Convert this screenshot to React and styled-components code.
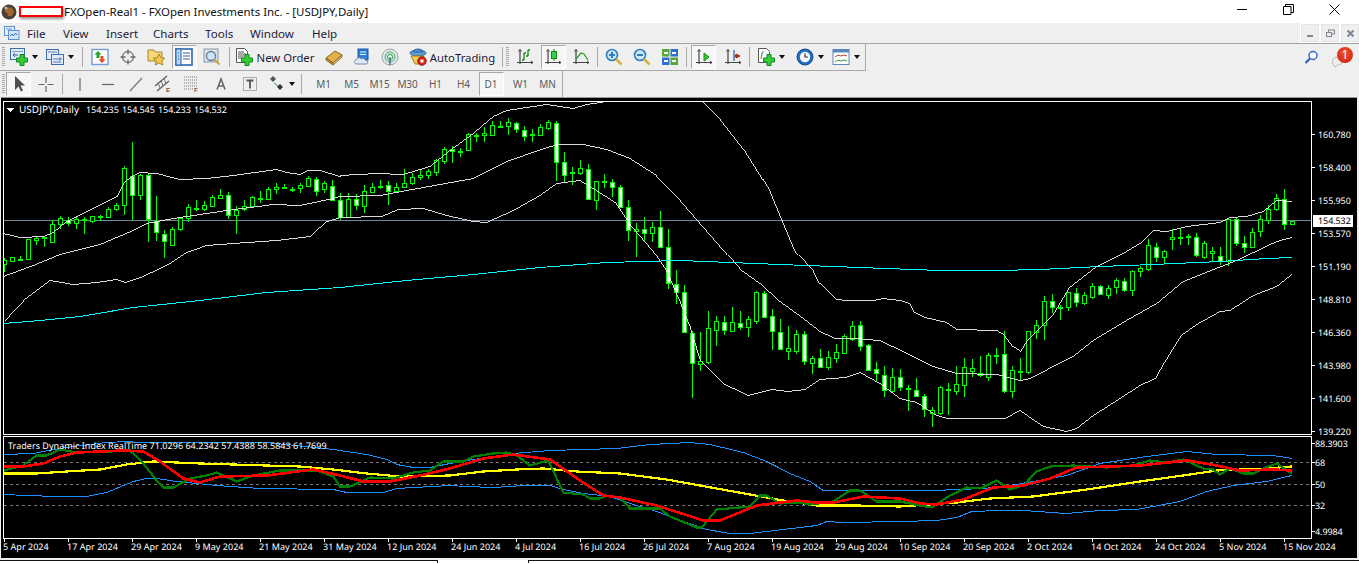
import React from 'react';
import styled, { createGlobalStyle } from 'styled-components';

const Global = createGlobalStyle`
  html, body { margin: 0; padding: 0; width: 1359px; height: 564px; overflow: hidden; background: #f0f0f0; }
  #root { width: 1359px; height: 564px; }
`;

const Page = styled.div`
  width: 1359px; height: 564px; display: flex; flex-direction: column; background: #efefef;
  font-family: "Noto Sans", "Liberation Sans", sans-serif; overflow: hidden;
`;
const TitleBar = styled.div`
  height: 23px; background: #fff; display: flex; align-items: center; flex: none; padding-left: 1px;
`;
const Redaction = styled.div`
  width: 40px; height: 7px; margin: -1px 1px 0 2px; background: #fff; border: 2px solid #f00;
  box-shadow: 1px 2px 3px rgba(0,0,0,.45);
`;
const TitleText = styled.span`font-size: 11.45px; color: #111; white-space: nowrap;`;
const WinControls = styled.div`margin-left: auto; display: flex; height: 23px; padding-right: 2px;`;
const WinButton = styled.div`width: 46px; height: 23px; display: flex; align-items: center; justify-content: center; margin-top: -2px;`;

const MenuBar = styled.div`height: 20px; display: flex; align-items: center; flex: none; padding-left: 4px; background: #efefef; position: relative;`;
const MenuItems = styled.div`display: flex; margin-left: 7px;`;
const MenuItem = styled.span`font-size: 11.6px; color: #1b1b3a; width: ${p => p.$w}px;`;
const MdiControls = styled.div`margin-left: auto; display: flex; gap: 2px; height: 20px; background: #fff; padding: 1px 0 1px 1px; box-sizing: border-box;`;
const MdiButton = styled.div`
  width: 18px; height: 18px; box-sizing: border-box; border: 1px solid #fff; background: #efefef;
  display: flex; align-items: center; justify-content: center; outline: 1px solid #e4e4e4; outline-offset: -1px;
`;

const ToolRow = styled.div`
  height: ${p => p.$h}px; display: flex; flex: none; box-sizing: border-box; position: relative;
  ${p => p.$top ? 'border-top: 1px solid #a3a3a3;' : ''}
`;
const ToolGroup = styled.div`
  width: ${p => p.$w}px; display: flex; align-items: center; box-sizing: border-box; padding-left: 2px;
  border-right: 1px solid #a9a9a9; ${p => p.$bottom ? 'border-bottom: 1px solid #a9a9a9;' : ''}
`;
const Grip = styled.div`
  width: 3px; height: 20px; margin-right: ${p => p.$m ?? 1}px; flex: none;
  background: repeating-linear-gradient(to bottom, #a8a8a8 0 1px, #efefef 1px 2px);
`;
const Sep = styled.div`
  width: ${p => p.$w}px; height: 20px; flex: none; display: flex; justify-content: center;
  margin-right: ${p => p.$mr || 0}px;
  &::before { content: ""; width: 1px; height: 100%; background: #a9a9a9; }
`;
const Tool = styled.div`
  width: ${p => p.$w}px; height: 24px; flex: none; display: flex; align-items: center; justify-content: center;
  box-sizing: border-box; gap: ${p => p.$gap || 0}px; font-size: 11.3px; color: #1b1b3a; white-space: nowrap;
  padding: 0 ${p => p.$pr || 0}px 0 ${p => p.$pl || 0}px;
  ${p => p.$pressed ? `
    margin: 0 ${p.$inset || 0}px; background: repeating-conic-gradient(#f2f2f2 0 25%, #fbfbfb 0 50%) 0 0 / 2px 2px;
    border: 1px solid; border-color: #a8a8a8 #fff #fff #a8a8a8;
  ` : ''}
`;
const Caret = styled.span`
  width: 0; height: 0; border-left: 3.5px solid transparent; border-right: 3.5px solid transparent;
  border-top: 4px solid #111; flex: none;
`;
const Frame = styled.span`font-size: 10px; color: #5a5a5a; letter-spacing: -.1px;`;
const RightTools = styled.div`
  position: absolute; right: 6px; top: 3px; display: flex; align-items: center; gap: 13px;
`;
const Bubble = styled.div`position: relative; width: 22px; height: 20px;`;
const BubbleTail = styled.svg`position: absolute; left: 0; top: 6px;`;
const Badge = styled.div`
  position: absolute; right: 0; top: 0; width: 16px; height: 16px; border-radius: 50%;
  background: radial-gradient(circle at 50% 35%, #f0502e, #c9200f); color: #fff; font-size: 12px;
  display: flex; align-items: center; justify-content: center; line-height: 1;
`;

const ChartWindow = styled.div`
  height: 461px; flex: none; margin: 0 2px 0 1px; border-top: 1px solid #9a9a9a; box-sizing: border-box; background: #000; display: flex;
`;
const ChartSvg = styled.svg`display: block; width: 1356px; height: 460px;`;
const ChartText = styled.text`
  font-family: "Noto Sans", "Liberation Sans", sans-serif; font-size: ${p => p.$size || 9}px; fill: ${p => p.$fill || '#fff'};
  letter-spacing: ${p => p.$ls ?? -.08}px; text-rendering: geometricPrecision;
`;
const BottomTabs = styled.div`flex: 1; display: flex; background: #fff; margin-top: 2px; position: relative;`;
const Tab = styled.div`
  width: ${p => p.$w}px; margin-left: ${p => p.$ml || 0}px; border-top: 1px solid #111; border-left: ${p => p.$ml ? '1px solid #111' : 'none'};
  border-right: ${p => p.$ml ? 'none' : '1px solid #111'}; box-sizing: border-box; height: 3px; background: #fff;
`;

/* ---------- chart data, read from the picture ---------- */
const seg = (by, rows) => rows.map(([a, b, c, d, k]) => [by + a / 3, by + b / 3, by + c / 3, by + d / 3, k]);
const candles = [
  ...seg(100, [
    [475,480,492,515,'h'],[472,472,484,484,'h'],[468,476,476,484,'t'],[418,418,478,478,'h'],[408,415,419,435,'h'],[412,412,412,442,'t'],
    [360,373,425,428,'h'],[348,355,373,388,'h'],[352,360,368,378,'w'],[352,358,368,386,'h'],[352,358,358,402,'t'],[349,349,362,368,'h'],
    [345,348,348,362,'t'],[322,328,350,354,'h'],[310,316,328,334,'h'],[198,205,316,345,'h'],[126,228,286,360,'w'],[222,226,286,300,'h'],
    [218,226,358,425,'w'],[288,362,396,424,'w'],[390,403,424,474,'w'],[380,388,434,434,'h'],[350,354,388,392,'h'],[312,322,355,365,'h'],
    [300,324,324,334,'t'],[304,314,326,332,'h'],[286,292,318,320,'h'],[267,284,293,296,'h'],[276,284,345,356,'w'],[318,330,346,402,'h'],
    [300,317,328,332,'h'],[288,292,318,320,'h'],[274,294,294,308,'t'],[262,268,296,296,'h'],[250,262,268,282,'h'],[252,262,262,266,'t'],
    [262,267,267,275,'t'],[250,254,265,278,'h'],[228,235,258,260,'h'],[232,236,272,288,'w'],[244,248,268,280,'h'],[240,257,300,302,'w'],
    [280,300,350,360,'w'],[280,298,350,352,'h'],[282,298,316,330,'w'],[256,274,317,338,'h'],[250,260,275,278,'h'],[240,257,257,268,'t'],
    [244,256,272,314,'w'],[248,260,272,274,'h'],[208,248,262,264,'h'],[220,230,248,255,'h'],[208,224,230,240,'h'],[206,214,224,236,'h'],
    [178,179,215,228,'h'],[142,148,182,192,'h'],[138,146,154,188,'w'],[145,152,152,170,'t'],[100,103,151,152,'h'],[98,104,104,126,'t'],
    [82,100,106,126,'h'],[64,76,106,106,'h'],[64,77,77,84,'t'],[54,67,77,104,'h'],[66,68,86,98,'w'],[78,89,109,122,'w'],
    [88,102,102,126,'t'],[72,82,104,106,'h'],[60,67,83,90,'h'],[64,68,187,244,'w'],[156,187,226,246,'w'],[202,215,215,254,'t'],
    [180,205,220,226,'h'],[192,206,296,300,'w'],[244,244,299,330,'h'],[222,244,244,264,'t'],[236,245,262,292,'w'],[256,260,320,322,'w'],
    [300,322,391,424,'w'],[370,386,391,472,'h'],[352,386,398,424,'w'],[366,382,398,426,'h'],[334,382,442,444,'w'],[388,440,550,568,'w'],
    [510,552,575,612,'w'],
  ]),
  ...seg(270, [
    [45,65,185,188,'w'],[182,188,280,384,'w'],[186,274,281,303,'h'],[123,175,275,282,'h'],[138,154,180,228,'h'],[138,155,181,195,'w'],
    [112,157,182,183,'h'],[124,158,170,180,'w'],[138,148,170,201,'h'],[64,67,152,162,'h'],[64,70,140,140,'w'],[116,139,182,240,'w'],
    [148,187,236,236,'w'],[168,235,242,270,'h'],[180,193,243,252,'h'],[184,193,274,286,'w'],[258,265,278,312,'h'],[237,265,290,292,'w'],
    [243,262,290,300,'h'],[222,247,263,280,'h'],[192,198,248,250,'h'],[153,168,206,212,'h'],[153,166,227,243,'w'],[222,226,299,300,'w'],
    [276,298,310,334,'w'],[288,316,360,380,'w'],[295,322,362,364,'h'],[296,322,352,362,'w'],[345,353,353,422,'t'],[324,361,377,380,'w'],
    [373,379,418,441,'w'],[411,420,429,470,'h'],[348,352,428,436,'h'],[338,356,356,436,'t'],[288,343,362,374,'h'],[264,292,344,380,'h'],
    [267,295,302,320,'h'],[258,308,316,320,'w'],[250,256,322,332,'h'],[234,254,254,282,'t'],[183,253,364,368,'w'],[288,301,364,384,'h'],
  ]),
  ...seg(170, [
    [565,603,603,630,'t'],[482,484,605,612,'h'],[450,466,487,508,'h'],[378,394,466,510,'h'],[372,394,412,428,'w'],[406,412,412,450,'t'],
    [366,367,412,422,'h'],[354,368,397,410,'w'],[366,376,398,404,'h'],[338,349,382,388,'h'],[345,349,373,376,'w'],[345,355,374,386,'h'],
    [325,331,352,372,'h'],[325,332,361,365,'w'],[300,304,361,377,'h'],[288,295,304,321,'h'],[207,226,298,303,'h'],[220,230,262,275,'w'],
    [240,244,262,280,'h'],[176,202,208,240,'h'],[178,200,200,224,'t'],[192,198,198,225,'t'],[190,200,256,262,'w'],[214,218,260,267,'h'],
    [232,244,250,274,'h'],[232,257,273,285,'w'],[144,148,272,287,'h'],[144,148,220,227,'w'],[198,218,232,250,'w'],[174,187,232,233,'h'],
    [136,148,184,200,'h'],[106,116,149,161,'h'],[72,83,116,123,'h'],[57,86,163,180,'w'],[152,152,163,163,'h'],
  ]),
];

const pts = (ox, oy, flat) => {
  const out = [];
  for (let i = 0; i < flat.length; i += 2) out.push(`${(ox + flat[i] / 3).toFixed(1)},${Math.floor(oy + flat[i + 1] / 3) + 0.5}`);
  return out.join(' ');
};
const upperBand = [
  pts(0,100,[10,400,60,411,130,410,160,396,200,365,350,288,370,250,395,228,420,218,470,220,540,238,620,234,700,226,830,208,860,218,900,222,925,211,960,212,1020,228]),
  pts(340,100,[0,226,110,220,190,222,270,200,330,150,400,100,460,50,500,30,620,13,700,25,740,12,800,5,820,0]),
  pts(680,100,[60,0,72,6,120,54,195,150,270,270,345,450]),
  pts(680,270,[400,0,420,40,470,88,500,90,550,92,580,92,610,85,660,92,690,100,705,128,735,142,800,158,830,177,950,181,975,195,1000,230,1020,242]),
  pts(1020,170,[0,545,20,510,100,430,145,355,230,290,310,250,360,220,400,180,440,183,500,170,600,158,630,142,680,138,730,125,770,90,815,95]),
].join(' ');
const middleBand = [
  pts(0,100,[10,530,100,495,180,462,300,432,400,390,440,370,520,355,680,330,820,312,900,316,1000,295]),
  pts(340,100,[0,290,120,285,200,272,400,235,500,185,630,140,660,133,730,133,800,148,870,175,950,225,1020,298]),
  pts(680,270,[185,0,240,40,300,95,370,145,420,185,465,205,520,205,600,212,700,260,760,290,830,310,950,313,1020,332]),
  pts(1020,170,[30,625,100,590,160,560,220,510,330,445,410,400,490,335,550,310,650,270,770,215,815,203]),
].join(' ');
const lowerBand = [
  pts(0,100,[10,665,70,600,150,541,220,553,290,548,350,538,375,547,430,530,510,490,560,458,620,437,700,430,830,420,930,410,980,365,1015,355]),
  pts(340,100,[0,352,125,350,175,328,250,325,320,345,400,364,440,368,520,330,600,285,650,250,720,240,760,265,830,310,870,370,940,450,985,520,1020,600]),
  pts(680,270,[0,92,30,165,60,265,135,342,205,376,275,358,325,365,375,357,420,327,495,322,540,307,600,340,660,385,710,397,770,435,805,445,975,445,1020,422]),
  pts(1020,170,[70,768,140,785,170,775,220,735,300,685,360,645,405,625,430,580,480,500,530,462,600,425,630,420,700,375,770,348,815,312]),
].join(' ');
const average = [
  pts(0,100,[10,670,120,660,240,650,400,622,600,600,800,578,1020,562]),
  pts(340,100,[0,562,200,542,400,523,600,503,800,487,1020,481]),
  pts(0,0,[2340,792,2820,810,3048,810,3060,807,3120,807,3300,798,3459,792,3660,783,3801,774,3876,771]),
].join(' ');

const ind = (a, b, c) => [pts(0,430,a), pts(450,430,b), pts(900,430,c)].join(' ');
const tdiUpper = ind(
  [12,73,100,70,160,58,220,48,320,38,380,35,420,36,560,37,700,36,800,38,1000,58,1100,72,1160,87,1190,103,1240,112,1290,112],
  [0,100,50,90,190,70,300,62,400,57,500,54,600,43,720,37,780,43,880,68,950,95,1020,130,1080,155,1120,180,1350,182],
  [100,180,250,175,330,165,400,155,500,135,600,100,740,78,860,65,950,72,1120,76,1175,85]);
const tdiLower = ind(
  [12,194,80,197,170,200,260,200,320,188,400,155,440,146,470,146,530,155,650,165,780,175,1000,178,1040,187,1150,187,1190,175,1350,165],
  [50,170,130,173,220,167,300,165,340,178,400,190,480,200,540,220,620,245,700,275,770,298,840,310,900,310,1000,298,1100,285,1130,274,1180,277,1350,275],
  [110,272,170,262,215,244,300,241,370,241,500,250,600,241,710,237,840,213,920,184,1000,165,1100,153,1175,137]);
const tdiYellow = ind(
  [12,131,110,131,200,125,300,118,380,102,460,93,600,100,900,108,1000,118,1100,130,1200,140,1350,135],
  [100,125,200,117,280,114,380,125,510,129,650,147,750,167,900,192,1000,212,1100,226,1220,227,1350,228],
  [170,218,270,205,400,198,560,178,720,155,870,133,950,122,1100,116,1175,110]);
const tdiGreen = ind(
  [12,120,70,105,110,75,140,75,180,58,230,67,330,63,390,62,430,100,470,150,490,173,520,173,570,145,620,136,650,127,710,153,760,137,840,122,950,122,1000,140,1020,170,1050,170,1110,142,1180,145,1240,127,1290,120,1330,93],
  [40,93,70,78,130,70,170,66,200,75,240,107,295,90,340,188,400,192,420,205,450,205,470,195,510,203,540,235,630,235,660,260,740,293,755,293,800,237,900,228,930,197,950,195,990,220,1050,218,1080,222,1150,215,1200,180,1230,180,1280,215,1350,215],
  [60,225,95,233,150,195,200,172,240,175,290,150,330,178,370,165,410,125,450,110,520,107,620,112,700,107,750,90,800,97,850,87,910,115,940,117,960,132,990,115,1030,130,1060,130,1090,115,1130,100,1175,130]);
const tdiRed = ind(
  [12,110,70,110,130,100,180,78,230,66,370,60,430,65,480,95,550,145,600,157,660,138,800,137,940,118,1020,135,1090,153,1170,155,1260,135,1350,115],
  [100,85,190,72,300,88,390,150,460,195,510,203,620,225,760,272,810,270,920,225,1040,212,1100,218,1150,218,1240,200,1350,204],
  [60,220,110,222,190,207,280,172,370,165,450,145,530,113,720,107,860,90,950,107,1020,120,1120,118,1175,122]);

const priceLabels = [['160.780',135],['158.400',168],['155.950',201],['153.570',234],['151.190',267],['148.810',300],['146.360',333],['143.980',366],['141.600',399],['139.220',432]];
const indicatorLabels = [['88.3903',443],['68',462],['50',484],['32',505],['4.9984',531]];
const dates = ['5 Apr 2024','17 Apr 2024','29 Apr 2024','9 May 2024','21 May 2024','31 May 2024','12 Jun 2024','24 Jun 2024','4 Jul 2024','16 Jul 2024','26 Jul 2024','7 Aug 2024','19 Aug 2024','29 Aug 2024','10 Sep 2024','20 Sep 2024','2 Oct 2024','14 Oct 2024','24 Oct 2024','5 Nov 2024','15 Nov 2024'];

const Candle = ({ i, c }) => {
  const [hi, top, bot, lo, kind] = c;
  const px = 4 + 8 * i;
  const t = Math.round(top), b = Math.round(bot);
  return (
    <g>
      <rect x={px} y={Math.round(hi)} width="1" height={Math.max(1, Math.round(lo) - Math.round(hi))} fill="#00ff00" />
      {kind === 't'
        ? <rect x={px - 2} y={t} width="5" height="2" fill="#00ff00" />
        : <>
            <rect x={px - 2} y={t} width="5" height={Math.max(3, b - t + 1)} fill="#00ff00" />
            <rect x={px - 1} y={t + 1} width="3" height={Math.max(1, b - t - 1)} fill={kind === 'w' ? '#fff' : '#000'} />
          </>}
    </g>
  );
};

const Chart = () => (
  <ChartSvg viewBox="1 98 1356 460" shapeRendering="crispEdges">
    <defs>
      <clipPath id="mainClip"><rect x="4" y="102" width="1307" height="332" /></clipPath>
      <clipPath id="indClip"><rect x="4" y="437" width="1307" height="101" /></clipPath>
    </defs>
    <rect x="3.5" y="101.5" width="1308" height="333" fill="none" stroke="#fff" />
    <rect x="3.5" y="436.5" width="1308" height="102" fill="none" stroke="#fff" />
    <g clipPath="url(#mainClip)">
      <line x1="4" x2="1311" y1="220.5" y2="220.5" stroke="#778899" />
      {candles.map((c, i) => <Candle key={i} i={i} c={c} />)}
      <polyline points={average} fill="none" stroke="#00ffff" />
      <polyline points={upperBand} fill="none" stroke="#fff" strokeWidth=".85" />
      <polyline points={middleBand} fill="none" stroke="#fff" strokeWidth=".85" />
      <polyline points={lowerBand} fill="none" stroke="#fff" strokeWidth=".85" />
    </g>
    <polygon points="7,108 14,108 10.5,112" fill="#fff" />
    <ChartText x="19" y="113" $size={10} $ls={0.02}>USDJPY,Daily</ChartText>
    <ChartText x="86" y="113" wordSpacing="1">154.235 154.545 154.233 154.532</ChartText>
    {priceLabels.map(([t, y]) => (
      <g key={t}>
        <rect x="1312" y={y - 1} width="3" height="1" fill="#fff" />
        <ChartText x="1318" y={y + 3}>{t}</ChartText>
      </g>
    ))}
    <rect x="1313" y="215" width="40" height="12" fill="#fff" />
    <ChartText x="1318" y="224" $fill="#000">154.532</ChartText>

    <g clipPath="url(#indClip)">
      {[462.5, 484.5, 505.5].map(y => <line key={y} x1="4" x2="1311" y1={y} y2={y} stroke="#777" strokeDasharray="3 3" />)}
      <polyline points={tdiUpper} fill="none" stroke="#1e90ff" />
      <polyline points={tdiLower} fill="none" stroke="#1e90ff" />
      <polyline points={tdiYellow} fill="none" stroke="#ffff00" strokeWidth="2.2" />
      <polyline points={tdiGreen} fill="none" stroke="#008000" strokeWidth="2.2" />
      <polyline points={tdiRed} fill="none" stroke="#ff0000" strokeWidth="2.6" />
    </g>
    <ChartText x="8" y="449" $ls={0.03}>Traders Dynamic Index RealTime 71.0296 64.2342 57.4388 58.5843 61.7699</ChartText>
    {indicatorLabels.map(([t, y]) => (
      <g key={t}>
        <rect x="1312" y={y} width="3" height="1" fill="#fff" />
        <ChartText x="1315" y={y + 4}>{t}</ChartText>
      </g>
    ))}
    {dates.map((d, i) => (
      <g key={d}>
        <rect x={4 + 64 * i} y="539" width="1" height="3" fill="#fff" />
        <ChartText x={3 + 64 * i} y="550" $ls={0.03}>{d}</ChartText>
      </g>
    ))}
  </ChartSvg>
);

/* ---------- icons ---------- */
const Ico = ({ w = 18, h = 18, children }) => <svg width={w} height={h} viewBox={`0 0 ${w} ${h}`}>{children}</svg>;
const Plus = ({ x = 6.500, y = 6.500 }) => (
  <path transform={`translate(${x} ${y})`} d="M3.500 0h4v3.500H11v4H7.500V11h-4V7.500H0v-4h3.500z" fill="#35cc35" stroke="#0f8a1f" strokeWidth="1" />
);
const AppIcon = () => (
  <Ico w={16} h={16}>
    <rect x=".5" y="1.5" width="10" height="9" fill="#e7f0fb" stroke="#5b8fd0" />
    <rect x="4.5" y="5.5" width="10.5" height="9" fill="#d3e4f8" stroke="#5b8fd0" />
    <path d="M6 11l2-2 1.5 2 2-3 1.5 2" fill="none" stroke="#3a6fb5" />
    <path d="M2 4h6" stroke="#5b8fd0" />
  </Ico>
);
const Globe = () => (
  <svg width="16" height="16" viewBox="0 0 16 16">
    <circle cx="8" cy="8" r="7.5" fill="#4a4038" />
    <path d="M4 6c2-3 5-3 7-2l2 4c-1 3-3 5-5 4-2 0-1-2-2-3S3 8 4 6z" fill="#a5662a" />
    <circle cx="5" cy="4" r="1.5" fill="#c9b7a0" />
  </svg>
);
const NewChart = () => (
  <Ico>
    <rect x=".5" y=".5" width="14" height="11" fill="#dfeafa" stroke="#3d6ea8" />
    <path d="M2 3.500h11" stroke="#7ba0cc" /><path d="M3 7h5M5 5L3 7l2 2" fill="none" stroke="#44658c" />
    <Plus />
  </Ico>
);
const Profiles = () => (
  <Ico>
    <rect x=".5" y="1.5" width="12" height="10" fill="#dfeafa" stroke="#3d6ea8" />
    <rect x="5.5" y="6.5" width="12" height="10" fill="#dfeafa" stroke="#3d6ea8" />
    <path d="M2 4h9M7 11h9M7 14h8M13 9.5l2 1.5-2 1.5" fill="none" stroke="#5e7fa8" />
  </Ico>
);
const MarketWatch = () => (
  <Ico>
    <rect x="1" y="1.5" width="16" height="15" fill="#fff" stroke="#6f9fd4" strokeWidth="1.4" />
    <path d="M7 3l3.5 3.5H8.5V10h-3V6.5H3.5z" fill="#21a621" />
    <path d="M11 15l-3.5-3.5h2V8h3v3.500h2z" fill="#e0502a" />
  </Ico>
);
const Crosshair = () => (
  <Ico>
    <circle cx="9" cy="9" r="5.500" fill="none" stroke="#777" strokeWidth="1.3" />
    <path d="M9 1.500v5M9 11.500v5M1.500 9h5M11.500 9h5" stroke="#666" strokeWidth="1.3" />
  </Ico>
);
const FolderStar = () => (
  <Ico>
    <path d="M1 2h6l1.500 2H15v9H1z" fill="#f6d976" stroke="#a8862c" />
    <path d="M12 6l1.800 3.700 4 .5-3 2.800.8 4-3.600-2-3.600 2 .8-4-3-2.800 4-.5z" fill="#f3c94a" stroke="#a5822a" />
  </Ico>
);
const Terminal = () => (
  <Ico>
    <rect x="1" y="1" width="16" height="16" fill="#fff" stroke="#2b67b0" strokeWidth="1.600" />
    <rect x="1" y="1" width="5" height="16" fill="#bcd6f3" stroke="#2b67b0" strokeWidth="1.100" />
    <path d="M3 5h1M3 8h1M3 11h1M8 5h7M8 8h7M8 11h7" stroke="#2b67b0" />
  </Ico>
);
const Tester = () => (
  <Ico>
    <rect x="1" y="1" width="14" height="13" fill="#dce2ea" stroke="#8d97a4" />
    <circle cx="8" cy="8" r="4.500" fill="#cfe4f8" stroke="#5f7d9d" strokeWidth="1.300" />
    <path d="M11.500 11.500L16.500 16.500" stroke="#c9a83c" strokeWidth="2" />
  </Ico>
);
const NewOrder = () => (
  <Ico>
    <path d="M1.500.5h8l3 3v11h-11z" fill="#fff" stroke="#555" />
    <path d="M3 4h6M3 6h8M3 8h7M3 10h5" stroke="#555" />
    <Plus />
  </Ico>
);
const Book = () => (
  <Ico>
    <path d="M1 10L10 3l7 4-9 8z" fill="#e0b04a" stroke="#8a6420" />
    <path d="M1 10l7 5v2l-7-5z" fill="#c39432" stroke="#8a6420" />
    <path d="M8 15l9-8v2l-9 8z" fill="#f3e2ab" stroke="#8a6420" />
  </Ico>
);
const CloudIcon = () => (
  <Ico>
    <rect x="5" y="1" width="10" height="11" fill="#2f7dd1" stroke="#1d5aa3" />
    <path d="M7 4h6M7 6.500h6" stroke="#dff" />
    <path d="M4 16c-3 0-3.500-3.500-1-4 .5-2.500 4-3 5-1 1.500-1.500 4-.5 4 1 3 0 4 4 1 4z" fill="#dfe9f5" stroke="#6e8aa8" />
  </Ico>
);
const Signal = () => (
  <Ico>
    <circle cx="9" cy="9" r="8" fill="#dfe7e8" stroke="#9aa9ad" />
    <circle cx="9" cy="9" r="5" fill="#bfe3c8" stroke="#6fa985" />
    <circle cx="9" cy="9" r="2.500" fill="#fff" stroke="#2a9d52" />
    <path d="M9 9v8" stroke="#3a6e96" strokeWidth="1.400" />
  </Ico>
);
const AutoIcon = () => (
  <Ico>
    <ellipse cx="9" cy="5" rx="8" ry="3" fill="#5f9fd8" stroke="#2d659e" />
    <path d="M4 4c1-4 9-4 10 0z" fill="#4b90cf" stroke="#2d659e" />
    <path d="M2 8h13l-3 8H6z" fill="#f0cc52" stroke="#a0802a" />
    <circle cx="13" cy="13" r="4.200" fill="#d9251b" stroke="#8f1611" />
    <rect x="11.500" y="11.500" width="3" height="3" fill="#fff" />
  </Ico>
);
const Axes = ({ children }) => (
  <Ico>
    <path d="M4 1.500V16M1 14.500h16" stroke="#444" strokeWidth="1.200" fill="none" />
    <path d="M2.500 3.500L4 1.500l1.500 2M15 13l2 1.500-2 1.500" stroke="#444" fill="none" />
    {children}
  </Ico>
);
const BarChart = () => <Axes><path d="M8 12V5M8 12H6M8 5h2M12 8V2M12 8h-2M12 2h2" stroke="#0f8a0f" strokeWidth="1.300" fill="none" /></Axes>;
const CandleChart = () => <Axes><path d="M10 1v12" stroke="#0f8a0f" /><rect x="7.500" y="3.500" width="5" height="7" fill="#33d053" stroke="#0f8a0f" /></Axes>;
const LineChart = () => <Axes><path d="M4 11l5-6 3 1 4 6" stroke="#2f9a2f" strokeWidth="1.300" fill="none" /></Axes>;
const Lens = ({ minus }) => (
  <Ico>
    <circle cx="7" cy="7" r="5.500" fill="#cfe6f8" stroke="#2d7fbe" strokeWidth="1.600" />
    <path d={minus ? 'M4 7h6' : 'M4 7h6M7 4v6'} stroke="#2d7fbe" strokeWidth="2" />
    <path d="M11 11l5.500 5.500" stroke="#d9b23d" strokeWidth="2.600" />
  </Ico>
);
const Tile = () => (
  <Ico>
    <rect x="1" y="1" width="7.500" height="7.500" fill="#56a83a" /><rect x="9.500" y="1" width="7.500" height="7.500" fill="#2e6fd0" />
    <rect x="1" y="9.500" width="7.500" height="7.500" fill="#2e6fd0" /><rect x="9.500" y="9.500" width="7.500" height="7.500" fill="#56a83a" />
    <path d="M3 5h4M11 5h4M3 13h4M11 13h4" stroke="#fff" strokeWidth="2" />
  </Ico>
);
const AutoScroll = () => <Axes><path d="M9 5l5 4-5 4z" fill="#39c639" stroke="#0f8a0f" /></Axes>;
const ChartShift = () => <Axes><path d="M10 2v11" stroke="#2b67b0" strokeWidth="1.300" /><path d="M16 8l-4-2v1.500h-1v1h1V10z" fill="#b02a1a" stroke="#b02a1a" /></Axes>;
const IndicatorsIcon = () => (
  <Ico>
    <path d="M1.500.5h8l3 3v11h-11z" fill="#fff" stroke="#555" />
    <text x="3.500" y="9" fontFamily="Liberation Serif, serif" fontStyle="italic" fontSize="9" fill="#333">f</text>
    <Plus />
  </Ico>
);
const ClockIcon = () => (
  <Ico>
    <circle cx="9" cy="9" r="8" fill="#1f6fc2" stroke="#134d8c" />
    <circle cx="9" cy="9" r="5.200" fill="#f4f6f8" />
    <path d="M9 5.500V9h3" stroke="#333" strokeWidth="1.200" fill="none" />
  </Ico>
);
const TemplateIcon = () => (
  <Ico>
    <rect x="1" y="1.500" width="16" height="15" fill="#fff" stroke="#5b88ba" />
    <rect x="1" y="1.500" width="16" height="3" fill="#5b88ba" />
    <path d="M3 9l3-2 3 1 3-1 3 1" stroke="#b5452c" fill="none" />
    <path d="M3 14l3-2 3 1 3-1 3 1" stroke="#3b9a3b" fill="none" />
  </Ico>
);
const Cursor = () => <Ico><path d="M5 1v14l3.500-3.500 2.500 5 2-1-2.500-5H15z" fill="#4d4d4d" /></Ico>;
const Cross = () => <Ico><path d="M9 2v6M9 11v6M1.500 9.500h6M10.500 9.500h6" stroke="#666" strokeWidth="1.200" /></Ico>;
const VLine = () => <Ico><path d="M9 3v13" stroke="#666" strokeWidth="1.200" /></Ico>;
const HLine = () => <Ico><path d="M3 9.500h12" stroke="#666" strokeWidth="1.200" /></Ico>;
const Trend = () => <Ico><path d="M3 16L15 3" stroke="#777" strokeWidth="1.200" /></Ico>;
const Channel = () => (
  <Ico>
    <path d="M1 11L13 1M3 16L15 6" stroke="#555" strokeWidth="1.100" />
    <path d="M4 7l2 6M7 5l2 6M10 3l2 6" stroke="#777" />
    <text x="12" y="17" fontFamily="Liberation Sans, sans-serif" fontSize="6" fontWeight="700" fill="#555">E</text>
  </Ico>
);
const Fibo = () => (
  <Ico>
    <path d="M1 2h13M1 5h13M1 8h13M1 11h13" stroke="#777" strokeDasharray="1 1" />
    <path d="M1 14h9" stroke="#777" strokeDasharray="1 1" />
    <text x="11" y="17" fontFamily="Liberation Sans, sans-serif" fontSize="6" fontWeight="700" fill="#555">F</text>
  </Ico>
);
const LabelA = () => <Ico><path d="M5 14.500L9 4l4 10.500M6.500 11h5" fill="none" stroke="#666" strokeWidth="1.600" /></Ico>;
const LabelT = () => (
  <Ico>
    <rect x="2.500" y="2.500" width="13" height="13" fill="none" stroke="#666" strokeDasharray="1 1" />
    <path d="M5.500 5.500h7M9 5.500v8" stroke="#555" strokeWidth="1.800" />
  </Ico>
);
const Arrows = () => (
  <Ico>
    <path d="M5 1l3 3-3 3-3-3z" fill="#555" /><path d="M12 9l3 3-3 3-3-3z" fill="#333" />
    <path d="M6 8l4 3" stroke="#3b9a3b" />
  </Ico>
);
const SearchBlue = () => (
  <Ico w={14} h={15}>
    <circle cx="9" cy="5.500" r="4" fill="#fff" stroke="#3568c9" strokeWidth="1.500" />
    <path d="M6 8.500L1.500 13" stroke="#2d5fc4" strokeWidth="2.200" />
  </Ico>
);
const Win = {
  Min: () => <svg width="11" height="11" viewBox="0 0 11 11"><path d="M0 5.500h10" stroke="#000" /></svg>,
  Restore: () => <svg width="11" height="11" viewBox="0 0 11 11"><path d="M.5 2.500h7.500v8H.5zM2.500 2.500V.5h8v8H8" fill="none" stroke="#000" /></svg>,
  Close: () => <svg width="11" height="11" viewBox="0 0 11 11"><path d="M.5.5l10 10M10.500.5l-10 10" stroke="#000" /></svg>,
};
const Mdi = {
  Min: () => <svg width="9" height="9" viewBox="0 0 9 9"><path d="M1 7h6" stroke="#7b8794" strokeWidth="2" /></svg>,
  Restore: () => <svg width="9" height="9" viewBox="0 0 9 9"><path d="M.5 3.500h5v4h-5zM2.500 3V1h6v4H6" fill="none" stroke="#7b8794" strokeWidth="1.100" /></svg>,
  Close: () => <svg width="9" height="9" viewBox="0 0 9 9"><path d="M1.500 1.500l6 6M7.500 1.500l-6 6" stroke="#7b8794" strokeWidth="2" /></svg>,
};

const menus = [['File', 36], ['View', 43], ['Insert', 47], ['Charts', 52], ['Tools', 45], ['Window', 62], ['Help', 30]];
const frames = ['M1', 'M5', 'M15', 'M30', 'H1', 'H4'];

export default function App() {
  return (
    <Page>
      <Global />
      <TitleBar>
        <Globe />
        <Redaction />
        <TitleText>FXOpen-Real1 - FXOpen Investments Inc. - [USDJPY,Daily]</TitleText>
        <WinControls>
          <WinButton><Win.Min /></WinButton>
          <WinButton><Win.Restore /></WinButton>
          <WinButton><Win.Close /></WinButton>
        </WinControls>
      </TitleBar>
      <MenuBar>
        <AppIcon />
        <MenuItems>
          {menus.map(([m, w]) => <MenuItem key={m} $w={w}>{m}</MenuItem>)}
        </MenuItems>
        <MdiControls>
          <MdiButton><Mdi.Min /></MdiButton>
          <MdiButton><Mdi.Restore /></MdiButton>
          <MdiButton><Mdi.Close /></MdiButton>
        </MdiControls>
      </MenuBar>
      <ToolRow $h={28} $top>
        <ToolGroup $w={866} $bottom>
          <Grip />
          <Tool $w={36} $gap={4}><NewChart /><Caret /></Tool>
          <Tool $w={36} $gap={4}><Profiles /><Caret /></Tool>
          <Sep $w={8} />
          <Tool $w={28}><MarketWatch /></Tool>
          <Tool $w={28}><Crosshair /></Tool>
          <Tool $w={28}><FolderStar /></Tool>
          <Tool $w={25} $pressed $inset={1.5}><Terminal /></Tool>
          <Tool $w={28}><Tester /></Tool>
          <Sep $w={7} />
          <Tool $w={86} $gap={4} $pr={3}><NewOrder />New Order</Tool>
          <Tool $w={29}><Book /></Tool>
          <Tool $w={28}><CloudIcon /></Tool>
          <Tool $w={28}><Signal /></Tool>
          <Tool $w={94} $gap={3} $pl={2}><AutoIcon />AutoTrading</Tool>
          <Sep $w={8} />
          <Grip $m={2} />
          <Tool $w={28}><BarChart /></Tool>
          <Tool $w={25} $pressed $inset={1.5}><CandleChart /></Tool>
          <Tool $w={28}><LineChart /></Tool>
          <Sep $w={5} />
          <Tool $w={28}><Lens /></Tool>
          <Tool $w={28}><Lens minus /></Tool>
          <Tool $w={28}><Tile /></Tool>
          <Sep $w={5} />
          <Tool $w={25} $pressed $inset={2}><AutoScroll /></Tool>
          <Tool $w={29}><ChartShift /></Tool>
          <Sep $w={4} />
          <Tool $w={40} $gap={4}><IndicatorsIcon /><Caret /></Tool>
          <Tool $w={37} $gap={4}><ClockIcon /><Caret /></Tool>
          <Tool $w={36} $gap={4}><TemplateIcon /><Caret /></Tool>
        </ToolGroup>
        <RightTools>
          <SearchBlue />
          <Bubble>
            <BubbleTail width="16" height="16" viewBox="0 0 16 16">
              <path d="M3 12c-3-2-2-8 4-8 5 0 6 5 3 7-2 1-3 1-4 1l-2 2z" fill="#eee" stroke="#bbb" />
            </BubbleTail>
            <Badge>1</Badge>
          </Bubble>
        </RightTools>
      </ToolRow>
      <ToolRow $h={26}>
        <ToolGroup $w={563}>
          <Grip $m={0} />
          <Tool $w={25} $pressed $inset={1}><Cursor /></Tool>
          <Tool $w={28}><Cross /></Tool>
          <Sep $w={5} />
          <Tool $w={29}><VLine /></Tool>
          <Tool $w={28.5}><HLine /></Tool>
          <Tool $w={27}><Trend /></Tool>
          <Tool $w={27}><Channel /></Tool>
          <Tool $w={30}><Fibo /></Tool>
          <Tool $w={28.5}><LabelA /></Tool>
          <Tool $w={29}><LabelT /></Tool>
          <Tool $w={34} $gap={3}><Arrows /><Caret /></Tool>
          <Sep $w={6} $mr={5.5} />
          {frames.map(f => <Tool key={f} $w={28}><Frame>{f}</Frame></Tool>)}
          <Tool $w={25} $pressed $inset={1}><Frame>D1</Frame></Tool>
          <Tool $w={32}><Frame>W1</Frame></Tool>
          <Tool $w={22}><Frame>MN</Frame></Tool>
        </ToolGroup>
      </ToolRow>
      <ChartWindow><Chart /></ChartWindow>
      <BottomTabs>
        <Tab $w={438} />
        <Tab $w={831} $ml={90} />
      </BottomTabs>
    </Page>
  );
}
